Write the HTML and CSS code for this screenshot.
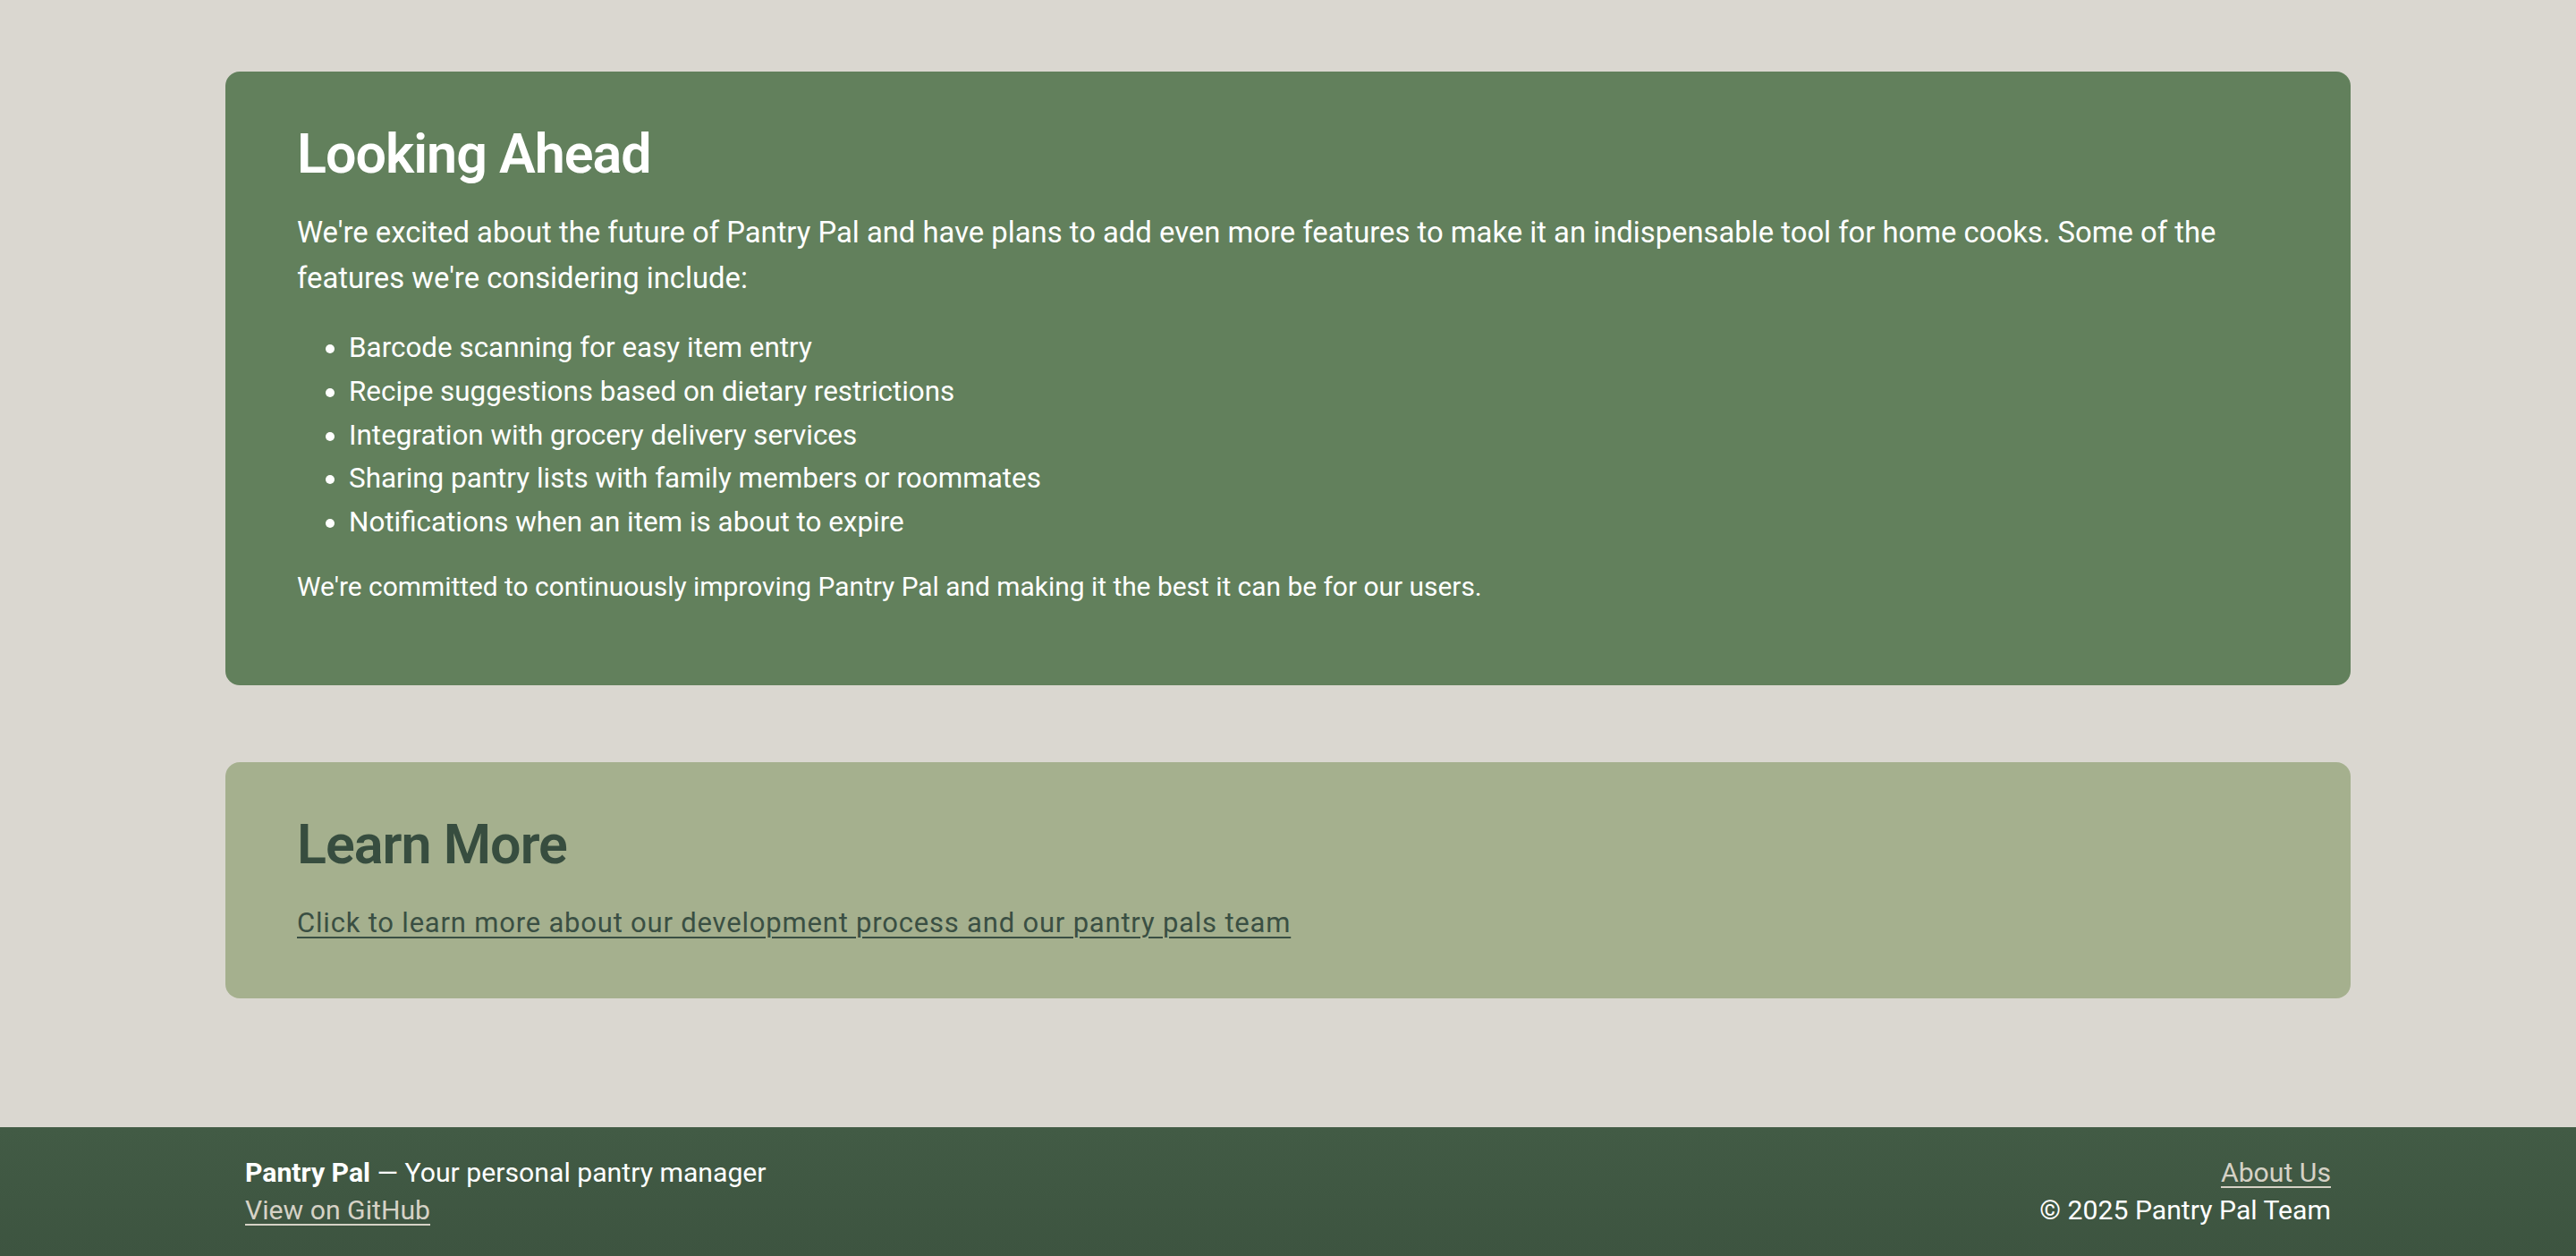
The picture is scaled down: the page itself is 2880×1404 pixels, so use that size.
FILE: index.html
```html
<!DOCTYPE html>
<html lang="en">
<head>
<meta charset="utf-8">
<title>Pantry Pal</title>
<link rel="stylesheet" href="styles.css">
</head>
<body>
<main class="page">
  <section class="card card-dark">
    <h2 class="card-title">Looking Ahead</h2>
    <p class="lead">We're excited about the future of Pantry Pal and have plans to add even more features to make it an indispensable tool for home cooks. Some of the features we're considering include:</p>
    <ul class="features">
      <li>Barcode scanning for easy item entry</li>
      <li>Recipe suggestions based on dietary restrictions</li>
      <li>Integration with grocery delivery services</li>
      <li>Sharing pantry lists with family members or roommates</li>
      <li>Notifications when an item is about to expire</li>
    </ul>
    <p class="closing">We're committed to continuously improving Pantry Pal and making it the best it can be for our users.</p>
  </section>
  <section class="card card-light">
    <h2 class="card-title">Learn More</h2>
    <p class="more"><a class="more-link" href="#">Click to learn more about our development process and our pantry pals team</a></p>
  </section>
</main>
<footer class="footer">
  <div class="footer-inner">
    <div class="footer-left">
      <div><strong>Pantry Pal</strong> — Your personal pantry manager</div>
      <div><a class="footer-link" href="#">View on GitHub</a></div>
    </div>
    <div class="footer-right">
      <div><a class="footer-link" href="#">About Us</a></div>
      <div>© 2025 Pantry Pal Team</div>
    </div>
  </div>
</footer>
</body>
</html>
```

FILE: styles.css
```css
* { box-sizing: border-box; }

html, body {
  margin: 0;
  padding: 0;
}

body {
  background: #dad7d0;
  font-family: Roboto, "Liberation Sans", sans-serif;
  color: #ffffff;
  min-height: 1404px;
  display: flex;
  flex-direction: column;
}

.page {
  width: 2376px;
  margin: 0 auto;
  padding: 80px 0 144px;
  display: flex;
  flex-direction: column;
  gap: 86px;
  flex: 1;
}

.card {
  border-radius: 16px;
  padding: 55px 80px 0;
}

.card-dark {
  background: #62805c;
  height: 686px;
}

.card-light {
  background: #a5b08e;
  color: #374d3f;
  height: 264px;
}

.card-title {
  margin: 0;
  font-size: 61px;
  line-height: 74px;
  font-weight: 600;
  letter-spacing: -1px;
}

.lead {
  margin: 26px 0 0;
  font-size: 32.8px;
  line-height: 51.2px;
}

.features {
  margin: 28px 0 0;
  padding-left: 58px;
  font-size: 31.4px;
  line-height: 48.6px;
}

.closing {
  margin: 24px 0 0;
  font-size: 29.9px;
  line-height: 48.6px;
}

.more {
  margin: 27px 0 0;
  font-size: 31px;
  line-height: 48.6px;
  letter-spacing: 0.8px;
}

.more-link {
  color: #3a4f43;
  text-decoration: underline;
  text-decoration-thickness: 2px;
  text-underline-offset: 5px;
}

.footer {
  background: linear-gradient(#425b45, #3d5440);
  color: #ffffff;
  height: 144px;
  padding: 30px 0;
  font-size: 30.2px;
  line-height: 42px;
}

.footer-inner {
  width: 2332px;
  margin: 0 auto;
  display: flex;
  justify-content: space-between;
}

.footer-right {
  text-align: right;
}

.footer-left strong {
  font-weight: 700;
}

.footer-link {
  color: #d6d2c6;
  text-decoration: underline;
  text-decoration-thickness: 2px;
  text-underline-offset: 5px;
}
```
